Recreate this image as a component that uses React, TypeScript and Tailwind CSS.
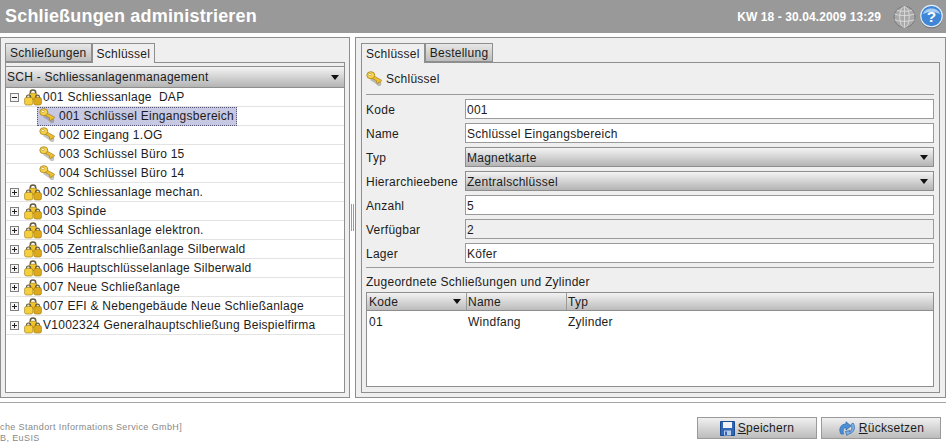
import React from 'react';

const font = "font-['Liberation_Sans',Arial,sans-serif]";

const KeyIcon = () => (
  <svg width="18" height="16" viewBox="0 0 18 16" className="shrink-0">
    <path d="M6 7 L15.5 12 L14.5 15 L12 15 L9.5 12.5 L4 9 Z" fill="#6d6a5c" opacity="0.4" />
    <path d="M6.5 4.2 L15.5 9.2 L14.3 11.6 L13 10.9 L12 12.6 L10.2 11.6 L10.7 9.8 L5 6.8 Z" fill="#eebf2e" stroke="#a87f12" strokeWidth="0.7" strokeLinejoin="round" />
    <ellipse cx="4.8" cy="4.2" rx="4" ry="3.5" fill="#f5d351" stroke="#a87f12" strokeWidth="0.8" />
    <ellipse cx="3.9" cy="3.5" rx="1.5" ry="1.1" fill="#fffbe6" stroke="#b08a1c" strokeWidth="0.5" />
  </svg>
);

const LockGroupIcon = () => (
  <svg width="18" height="17" viewBox="0 0 18 17" className="shrink-0">
    <path d="M6.3 5 V3.4 C6.3 0.2 11.7 0.2 11.7 3.4 V5" fill="none" stroke="#5f5a45" strokeWidth="1.5" />
    <rect x="5.2" y="4.2" width="7.6" height="6.4" rx="1.6" fill="#f0c22c" stroke="#96730f" strokeWidth="0.6" />
    <path d="M2.6 9 V7.8 C2.6 5.4 6.6 5.4 6.6 7.8 V9" fill="none" stroke="#5f5a45" strokeWidth="1.2" />
    <rect x="0.6" y="8.4" width="8.2" height="7.6" rx="1.8" fill="#f6cf3c" stroke="#96730f" strokeWidth="0.6" />
    <path d="M11.6 9 V7.8 C11.6 5.6 15.4 5.6 15.4 7.8 V9" fill="none" stroke="#5f5a45" strokeWidth="1.2" />
    <rect x="9.8" y="8.4" width="7.6" height="7.6" rx="1.8" fill="#dcaa1c" stroke="#96730f" strokeWidth="0.6" />
  </svg>
);

const Expander = ({ open }: { open?: boolean }) => (
  <div className="w-[9px] h-[9px] border border-[#808080] bg-[#f4f4f4] flex items-center justify-center relative shrink-0">
    <div className="w-[5px] h-px bg-[#222]" />
    {!open && <div className="absolute w-px h-[5px] bg-[#222]" />}
  </div>
);

const GlobeIcon = () => (
  <svg width="23" height="24" viewBox="0 0 24 24" className="shrink-0">
    <circle cx="12" cy="12" r="11" fill="#a9a9a9" stroke="#777" />
    <g fill="none" stroke="#e4e4e4" strokeWidth="0.8">
      <ellipse cx="12" cy="12" rx="5" ry="11" />
      <path d="M12 1 V23 M1.5 9 C7 11 17 11 22.5 9 M1.5 15 C7 17 17 17 22.5 15 M4 5 C8 6.5 16 6.5 20 5" />
    </g>
  </svg>
);

const HelpIcon = () => (
  <svg width="23" height="26" viewBox="0 0 24 26" className="shrink-0">
    <circle cx="12" cy="13.5" r="11.5" fill="#555" opacity="0.5" />
    <circle cx="12" cy="12" r="11.2" fill="#3f86d6" stroke="#e4eefa" strokeWidth="1.2" />
    <path d="M3 10 C5 2 19 2 21 10 C15 7 9 7 3 10 Z" fill="#a8cdf2" />
    <text x="12" y="18" textAnchor="middle" fontSize="16" fontWeight="700" fill="#fff" fontFamily="Liberation Sans, sans-serif">?</text>
  </svg>
);

const SaveIcon = () => (
  <svg width="15" height="15" viewBox="0 0 15 15" className="shrink-0">
    <path d="M0.5 0.5 H14.5 V14.5 H0.5 Z" fill="#2f68b8" stroke="#1c4a8e" />
    <rect x="3" y="1" width="9" height="6" fill="#f2f2f2" />
    <rect x="4" y="9.5" width="7" height="5" fill="#b9cbe6" />
    <rect x="5" y="10.5" width="2" height="3.5" fill="#2f68b8" />
  </svg>
);

const ResetIcon = () => (
  <svg width="18" height="15" viewBox="0 0 18 15" className="shrink-0">
    <path d="M3 13 C0 8 3 3 8 3 V0.8 L13 5 L8 9 V6.5 C5.5 6.5 4.5 9 5.5 13 Z" fill="#4a90d9" stroke="#2a64a8" strokeWidth="0.7" />
    <path d="M15 2 C18 6 16.5 12 10.5 13 L9 14.5 L7.5 10.5 L12 9.5 L11.5 11 C14 10 14.5 6.5 13 3.5 Z" fill="#7db4ea" stroke="#2a64a8" strokeWidth="0.7" />
  </svg>
);

const Tab = ({ label, active }: { label: string; active?: boolean }) => (
  <div
    className={`px-[4px] flex items-center border border-[#8e8e8e] ${
      active
        ? 'bg-[#efefef] border-b-0 -mb-px z-10 relative h-[20px]'
        : 'h-[19px] self-end bg-gradient-to-b from-[#e8e8e8] to-[#bdbdbd]'
    }`}
  >
    {label}
  </div>
);

const Caret = () => (
  <div className="w-0 h-0 border-x-[4px] border-x-transparent border-t-[5px] border-t-[#111]" />
);

const SelectBox = ({ value, className }: { value: string; className?: string }) => (
  <div
    className={`flex items-center justify-between border border-[#8e8e8e] bg-gradient-to-b from-[#f4f4f4] to-[#b4b4b4] pl-px pr-[5px] ${className ?? ''}`}
  >
    <span>{value}</span>
    <Caret />
  </div>
);

type TreeRow = { label: string; level: 0 | 1; open?: boolean; selected?: boolean };

const treeRows: TreeRow[] = [
  { label: '001 Schliessanlage  DAP', level: 0, open: true },
  { label: '001 Schlüssel Eingangsbereich', level: 1, selected: true },
  { label: '002 Eingang 1.OG', level: 1 },
  { label: '003 Schlüssel Büro 15', level: 1 },
  { label: '004 Schlüssel Büro 14', level: 1 },
  { label: '002 Schliessanlage mechan.', level: 0 },
  { label: '003 Spinde', level: 0 },
  { label: '004 Schliessanlage elektron.', level: 0 },
  { label: '005 Zentralschließanlage Silberwald', level: 0 },
  { label: '006 Hauptschlüsselanlage Silberwald', level: 0 },
  { label: '007 Neue Schließanlage', level: 0 },
  { label: '007 EFI & Nebengebäude Neue Schließanlage', level: 0 },
  { label: 'V1002324 Generalhauptschließung Beispielfirma', level: 0 },
];

type Field = { label: string; value: string; kind: 'input' | 'select' | 'readonly' };

const fields: Field[] = [
  { label: 'Kode', value: '001', kind: 'input' },
  { label: 'Name', value: 'Schlüssel Eingangsbereich', kind: 'input' },
  { label: 'Typ', value: 'Magnetkarte', kind: 'select' },
  { label: 'Hierarchieebene', value: 'Zentralschlüssel', kind: 'select' },
  { label: 'Anzahl', value: '5', kind: 'input' },
  { label: 'Verfügbar', value: '2', kind: 'readonly' },
  { label: 'Lager', value: 'Köfer', kind: 'input' },
];

const FooterButton = ({ icon, first, rest }: { icon: React.ReactNode; first: string; rest: string }) => (
  <div className="w-[120px] h-[22px] border border-[#9a9a9a] bg-gradient-to-b from-[#f0f0f0] to-[#bcbcbc] flex items-center justify-center gap-[3px]">
    {icon}
    <span>
      <span className="underline">{first}</span>
      {rest}
    </span>
  </div>
);

export default function App() {
  return (
    <div className={`${font} w-[946px] h-[444px] bg-white overflow-hidden text-[12px] tracking-[0.26px] text-[#1c1c1c] flex flex-col`}>
      {/* Title bar */}
      <div className="h-[33px] bg-[#999999] flex items-center justify-between pl-[5px] pr-[3px] shrink-0">
        <div className="text-[18px] font-bold text-white tracking-[0.18px]">Schließungen administrieren</div>
        <div className="flex items-center">
          <span className="text-[12px] font-bold text-white tracking-[0.1px] mr-[12px]">KW 18 - 30.04.2009 13:29</span>
          <GlobeIcon />
          <span className="w-[4px]" />
          <HelpIcon />
        </div>
      </div>

      {/* Main area */}
      <div className="flex pt-1 shrink-0">
        {/* Left panel */}
        <div className="w-[350px] h-[361px] border border-[#8e8e8e] bg-[#efefef] pt-[5px] pl-1 pr-1 pb-1 flex flex-col">
          <div className="flex">
            <Tab label="Schließungen" />
            <Tab label="Schlüssel" active />
          </div>
          <div className="flex-1 border border-[#8e8e8e] flex flex-col">
            <SelectBox value="SCH - Schliessanlagenmanagement" className="h-[22px] mt-[3px] border-x-0 shrink-0" />
            <div className="flex-1 flex flex-col bg-white">
              {treeRows.map((row) => (
                <div key={row.label} className="h-[19px] border-b border-[#e3e3e3] flex items-center pl-[4px]">
                  {row.level === 0 ? (
                    <>
                      <Expander open={row.open} />
                      <span className="w-[5px]" />
                      <LockGroupIcon />
                      <span className="ml-px whitespace-pre">{row.label}</span>
                    </>
                  ) : (
                    <div className={`ml-[27px] h-[19px] flex items-center pl-[2px] pr-[3px] ${row.selected ? 'bg-[#c7c8e2] outline-dotted outline-1 -outline-offset-1 outline-[#55557a]' : ''}`}>
                      <KeyIcon />
                      <span className="ml-[2px]">{row.label}</span>
                    </div>
                  )}
                </div>
              ))}
            </div>
          </div>
        </div>

        {/* Splitter */}
        <div className="w-[5px] flex items-center justify-center">
          <div className="w-[3px] h-[27px] border-x border-[#9a9a9a]" />
        </div>

        {/* Right panel */}
        <div className="flex-1 h-[361px] border border-[#8e8e8e] bg-[#efefef] pt-[5px] pl-[5px] pr-[5px] pb-1 flex flex-col">
          <div className="flex">
            <Tab label="Schlüssel" active />
            <Tab label="Bestellung" />
          </div>
          <div className="flex-1 border border-[#8e8e8e] pl-1 pr-[5px] flex flex-col">
            <div className="h-[32px] flex items-center border-b border-[#9a9a9a] gap-[2px] shrink-0">
              <KeyIcon />
              <span>Schlüssel</span>
            </div>
            <div className="flex flex-col gap-1 pt-[4px]">
              {fields.map((f) => (
                <div key={f.label} className="flex items-center h-5">
                  <div className="w-[99px] shrink-0 pt-px">{f.label}</div>
                  {f.kind === 'select' ? (
                    <SelectBox value={f.value} className="flex-1 h-5 pt-px" />
                  ) : (
                    <div
                      className={`flex-1 h-5 border border-[#9a9a9a] pl-px pt-px flex items-center ${
                        f.kind === 'readonly' ? 'bg-[#efefef]' : 'bg-white'
                      }`}
                    >
                      {f.value}
                    </div>
                  )}
                </div>
              ))}
            </div>
            <div className="mt-1 border-t border-[#9a9a9a] pt-[3px] h-[25px] flex items-center shrink-0">
              Zugeordnete Schließungen und Zylinder
            </div>
            <div className="flex-1 mb-[5px] border border-[#8e8e8e] bg-white flex flex-col">
              <div className="h-[18px] flex border-b border-[#8e8e8e] bg-gradient-to-b from-[#f2f2f2] to-[#bcbcbc] shrink-0">
                <div className="w-[100px] border-r border-[#9a9a9a] flex items-center justify-between pl-[2px] pr-[5px]">
                  Kode <Caret />
                </div>
                <div className="w-[100px] border-r border-[#9a9a9a] flex items-center pl-px">Name</div>
                <div className="flex-1 flex items-center pl-px">Typ</div>
              </div>
              <div className="h-[21px] flex items-center">
                <div className="w-[100px] pl-[2px]">01</div>
                <div className="w-[100px] pl-px">Windfang</div>
                <div className="pl-px">Zylinder</div>
              </div>
            </div>
          </div>
        </div>
      </div>

      {/* Footer */}
      <div className="mt-[4px] border-t border-[#a5a5a5] flex justify-between pr-[5px] pt-[14px]">
        <div className="text-[9px] leading-[11px] tracking-[0.4px] text-[#888888] pt-[5px]">
          <div>che Standort Informations Service GmbH]</div>
          <div>B, EuSIS</div>
        </div>
        <div className="flex gap-1">
          <FooterButton icon={<SaveIcon />} first="S" rest="peichern" />
          <FooterButton icon={<ResetIcon />} first="R" rest="ücksetzen" />
        </div>
      </div>
    </div>
  );
}
